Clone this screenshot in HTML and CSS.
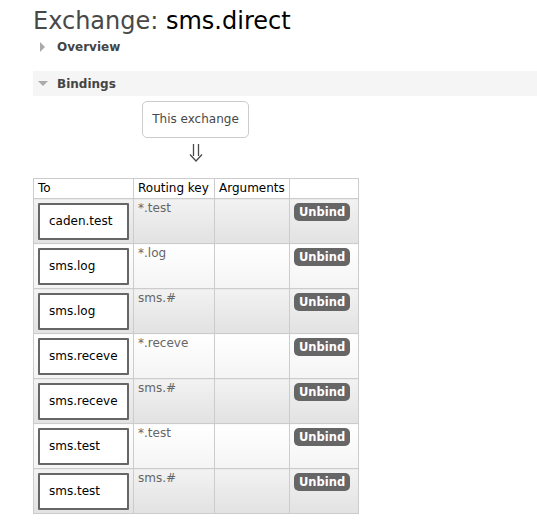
FILE: index.html
```html
<!DOCTYPE html>
<html>
<head>
<meta charset="utf-8">
<link rel="stylesheet" href="styles.css">
</head>
<body>
<div class="page">
  <h1 class="title">Exchange: <b>sms.direct</b></h1>
  <div class="section closed"><span class="tri-right"></span>Overview</div>
  <div class="section open"><span class="tri-down"></span>Bindings</div>
  <div class="diagram">
    <div class="thisx">This exchange</div>
    <svg class="arrow" width="14" height="20" viewBox="0 0 14 20">
      <path d="M4.5 1V13M9.5 1V13M1 11.5L7 18L13 11.5" fill="none" stroke="#4a4a4a" stroke-width="1.3"/>
    </svg>
  </div>
  <table class="bindings">
    <thead>
      <tr><th class="c-to">To</th><th class="c-rk">Routing key</th><th class="c-args">Arguments</th><th class="c-act"></th></tr>
    </thead>
    <tbody>
      <tr class="alt1"><td><span class="queue">caden.test</span></td><td>*.test</td><td></td><td><span class="btn">Unbind</span></td></tr>
      <tr class="alt2"><td><span class="queue">sms.log</span></td><td>*.log</td><td></td><td><span class="btn">Unbind</span></td></tr>
      <tr class="alt1"><td><span class="queue">sms.log</span></td><td>sms.#</td><td></td><td><span class="btn">Unbind</span></td></tr>
      <tr class="alt2"><td><span class="queue">sms.receve</span></td><td>*.receve</td><td></td><td><span class="btn">Unbind</span></td></tr>
      <tr class="alt1"><td><span class="queue">sms.receve</span></td><td>sms.#</td><td></td><td><span class="btn">Unbind</span></td></tr>
      <tr class="alt2"><td><span class="queue">sms.test</span></td><td>*.test</td><td></td><td><span class="btn">Unbind</span></td></tr>
      <tr class="alt1"><td><span class="queue">sms.test</span></td><td>sms.#</td><td></td><td><span class="btn">Unbind</span></td></tr>
    </tbody>
  </table>
</div>
</body>
</html>
```
FILE: styles.css
```css
html, body {
  margin: 0;
  padding: 0;
  background: #fff;
}
body {
  font-family: "DejaVu Sans", Verdana, sans-serif;
  font-size: 12px;
  color: #484848;
}
.page {
  padding: 7px 0 0 33px;
}
.title {
  margin: 0;
  font-size: 24px;
  font-weight: normal;
  line-height: 28px;
  color: #484848;
}
.title b {
  font-weight: normal;
  color: #000;
}
.section {
  font-weight: bold;
  color: #444;
  display: flex;
  align-items: center;
  height: 25px;
  padding-left: 7px;
}
.section.closed {
  height: 24px;
  margin-top: 0;
  margin-bottom: 12px;
}
.section.open {
  background: #f5f5f5;
  padding-left: 5px;
}
.tri-right {
  width: 0;
  height: 0;
  border-top: 5px solid transparent;
  border-bottom: 5px solid transparent;
  border-left: 5px solid #aaa;
  margin-right: 12px;
}
.tri-down {
  width: 0;
  height: 0;
  border-left: 5px solid transparent;
  border-right: 5px solid transparent;
  border-top: 5px solid #aaa;
  margin-right: 9px;
}
.diagram {
  width: 325px;
  display: flex;
  flex-direction: column;
  align-items: center;
  padding-top: 5px;
}
.thisx {
  border: 1px solid #ccc;
  border-radius: 5px;
  padding: 0 9px;
  height: 35px;
  line-height: 35px;
  color: #484848;
}
.arrow {
  display: block;
  margin-top: 5px;
  margin-left: 0;
}
.bindings {
  border-collapse: collapse;
  margin-top: 15px;
  border: 1px solid #ccc;
}
.bindings th {
  font-weight: normal;
  text-align: left;
  color: #000;
  border: 1px solid #ccc;
  padding: 0 4px;
  height: 19px;
  line-height: 19px;
  background: #fff;
}
.c-to { width: 91px; }
.c-rk { width: 72px; }
.c-args { width: 66px; }
.c-act { width: 60px; }
.bindings td {
  border: 1px solid #ccc;
  vertical-align: top;
  padding: 4px 4px 0 4px;
  height: 40px;
  color: #666;
}
.bindings tr.alt1 td {
  background: linear-gradient(#f2f2f2, #e2e2e2);
}
.bindings tr.alt2 td {
  background: linear-gradient(#fff, #f4f4f4);
}
.bindings td:nth-child(2) {
  padding-top: 2px;
  height: 42px;
}
.queue {
  display: block;
  height: 33px;
  line-height: 33px;
  border: 2px solid #666;
  border-radius: 1px;
  background: #fff;
  color: #000;
  padding-left: 9px;
  box-sizing: content-box;
  width: 78px;
}
.btn {
  display: inline-block;
  background: #666;
  color: #fff;
  font-weight: bold;
  font-size: 11.5px;
  border-radius: 5px;
  padding: 0 5px;
  height: 18px;
  line-height: 18px;
}
```
